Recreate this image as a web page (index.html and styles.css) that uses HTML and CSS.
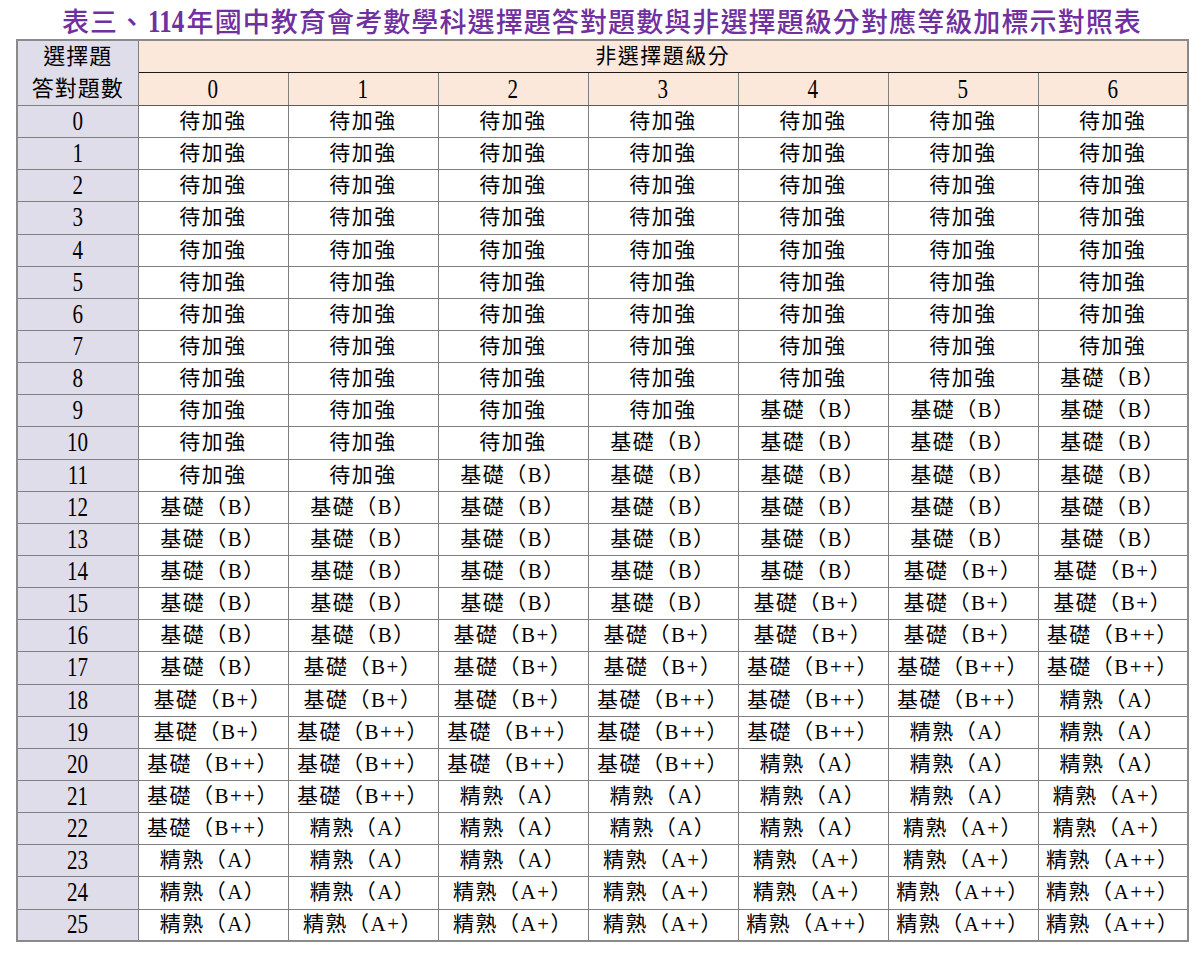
FILE: index.html
```html
<!DOCTYPE html>
<html lang="zh-Hant">
<head>
<meta charset="utf-8">
<title>表三、114年國中教育會考數學科選擇題答對題數與非選擇題級分對應等級加標示對照表</title>
<link rel="stylesheet" href="styles.css">
</head>
<body>
<h1 class="title">表三、<span class="tnum">114</span>年國中教育會考數學科選擇題答對題數與非選擇題級分對應等級加標示對照表</h1>
<table class="grid">
<colgroup>
<col class="c-first"><col class="c-data"><col class="c-data"><col class="c-data"><col class="c-data"><col class="c-data"><col class="c-data"><col class="c-data">
</colgroup>
<thead>
<tr class="h1row"><th class="corner" rowspan="2">選擇題<br>答對題數</th><th class="span" colspan="7">非選擇題級分</th></tr>
<tr class="h2row"><th><span class="n">0</span></th><th><span class="n">1</span></th><th><span class="n">2</span></th><th><span class="n">3</span></th><th><span class="n">4</span></th><th><span class="n">5</span></th><th><span class="n">6</span></th></tr>
</thead>
<tbody>
<tr><th><span class="n">0</span></th><td>待加強</td><td>待加強</td><td>待加強</td><td>待加強</td><td>待加強</td><td>待加強</td><td>待加強</td></tr>
<tr><th><span class="n">1</span></th><td>待加強</td><td>待加強</td><td>待加強</td><td>待加強</td><td>待加強</td><td>待加強</td><td>待加強</td></tr>
<tr><th><span class="n">2</span></th><td>待加強</td><td>待加強</td><td>待加強</td><td>待加強</td><td>待加強</td><td>待加強</td><td>待加強</td></tr>
<tr><th><span class="n">3</span></th><td>待加強</td><td>待加強</td><td>待加強</td><td>待加強</td><td>待加強</td><td>待加強</td><td>待加強</td></tr>
<tr><th><span class="n">4</span></th><td>待加強</td><td>待加強</td><td>待加強</td><td>待加強</td><td>待加強</td><td>待加強</td><td>待加強</td></tr>
<tr><th><span class="n">5</span></th><td>待加強</td><td>待加強</td><td>待加強</td><td>待加強</td><td>待加強</td><td>待加強</td><td>待加強</td></tr>
<tr><th><span class="n">6</span></th><td>待加強</td><td>待加強</td><td>待加強</td><td>待加強</td><td>待加強</td><td>待加強</td><td>待加強</td></tr>
<tr><th><span class="n">7</span></th><td>待加強</td><td>待加強</td><td>待加強</td><td>待加強</td><td>待加強</td><td>待加強</td><td>待加強</td></tr>
<tr><th><span class="n">8</span></th><td>待加強</td><td>待加強</td><td>待加強</td><td>待加強</td><td>待加強</td><td>待加強</td><td>基礎（B）</td></tr>
<tr><th><span class="n">9</span></th><td>待加強</td><td>待加強</td><td>待加強</td><td>待加強</td><td>基礎（B）</td><td>基礎（B）</td><td>基礎（B）</td></tr>
<tr><th><span class="n">10</span></th><td>待加強</td><td>待加強</td><td>待加強</td><td>基礎（B）</td><td>基礎（B）</td><td>基礎（B）</td><td>基礎（B）</td></tr>
<tr><th><span class="n">11</span></th><td>待加強</td><td>待加強</td><td>基礎（B）</td><td>基礎（B）</td><td>基礎（B）</td><td>基礎（B）</td><td>基礎（B）</td></tr>
<tr><th><span class="n">12</span></th><td>基礎（B）</td><td>基礎（B）</td><td>基礎（B）</td><td>基礎（B）</td><td>基礎（B）</td><td>基礎（B）</td><td>基礎（B）</td></tr>
<tr><th><span class="n">13</span></th><td>基礎（B）</td><td>基礎（B）</td><td>基礎（B）</td><td>基礎（B）</td><td>基礎（B）</td><td>基礎（B）</td><td>基礎（B）</td></tr>
<tr><th><span class="n">14</span></th><td>基礎（B）</td><td>基礎（B）</td><td>基礎（B）</td><td>基礎（B）</td><td>基礎（B）</td><td>基礎（B+）</td><td>基礎（B+）</td></tr>
<tr><th><span class="n">15</span></th><td>基礎（B）</td><td>基礎（B）</td><td>基礎（B）</td><td>基礎（B）</td><td>基礎（B+）</td><td>基礎（B+）</td><td>基礎（B+）</td></tr>
<tr><th><span class="n">16</span></th><td>基礎（B）</td><td>基礎（B）</td><td>基礎（B+）</td><td>基礎（B+）</td><td>基礎（B+）</td><td>基礎（B+）</td><td>基礎（B++）</td></tr>
<tr><th><span class="n">17</span></th><td>基礎（B）</td><td>基礎（B+）</td><td>基礎（B+）</td><td>基礎（B+）</td><td>基礎（B++）</td><td>基礎（B++）</td><td>基礎（B++）</td></tr>
<tr><th><span class="n">18</span></th><td>基礎（B+）</td><td>基礎（B+）</td><td>基礎（B+）</td><td>基礎（B++）</td><td>基礎（B++）</td><td>基礎（B++）</td><td>精熟（A）</td></tr>
<tr><th><span class="n">19</span></th><td>基礎（B+）</td><td>基礎（B++）</td><td>基礎（B++）</td><td>基礎（B++）</td><td>基礎（B++）</td><td>精熟（A）</td><td>精熟（A）</td></tr>
<tr><th><span class="n">20</span></th><td>基礎（B++）</td><td>基礎（B++）</td><td>基礎（B++）</td><td>基礎（B++）</td><td>精熟（A）</td><td>精熟（A）</td><td>精熟（A）</td></tr>
<tr><th><span class="n">21</span></th><td>基礎（B++）</td><td>基礎（B++）</td><td>精熟（A）</td><td>精熟（A）</td><td>精熟（A）</td><td>精熟（A）</td><td>精熟（A+）</td></tr>
<tr><th><span class="n">22</span></th><td>基礎（B++）</td><td>精熟（A）</td><td>精熟（A）</td><td>精熟（A）</td><td>精熟（A）</td><td>精熟（A+）</td><td>精熟（A+）</td></tr>
<tr><th><span class="n">23</span></th><td>精熟（A）</td><td>精熟（A）</td><td>精熟（A）</td><td>精熟（A+）</td><td>精熟（A+）</td><td>精熟（A+）</td><td>精熟（A++）</td></tr>
<tr><th><span class="n">24</span></th><td>精熟（A）</td><td>精熟（A）</td><td>精熟（A+）</td><td>精熟（A+）</td><td>精熟（A+）</td><td>精熟（A++）</td><td>精熟（A++）</td></tr>
<tr><th><span class="n">25</span></th><td>精熟（A）</td><td>精熟（A+）</td><td>精熟（A+）</td><td>精熟（A+）</td><td>精熟（A++）</td><td>精熟（A++）</td><td>精熟（A++）</td></tr>
</tbody>
</table>
</body>
</html>
```

FILE: styles.css
```css
html, body {
  margin: 0;
  padding: 0;
  background: #ffffff;
}

body {
  font-family: "Liberation Serif", "Noto Sans CJK TC", serif;
  color: #000000;
}

.title {
  margin: 0;
  height: 39px;
  line-height: 42px;
  text-align: center;
  font-family: "Liberation Serif", "Noto Sans CJK TC", serif;
  font-size: 27px;
  font-weight: 500;
  letter-spacing: 1.1px;
  color: #7030a0;
  white-space: nowrap;
}

.title .tnum {
  display: inline-block;
  font-size: 32px;
  font-weight: 700;
  transform: scaleX(0.78);
  margin: 0 -3px;
  letter-spacing: 0;
}

.grid {
  margin-left: 16px;
  border-collapse: collapse;
  table-layout: fixed;
  width: 1172px;
  border: 2px solid #8a8a8a;
}

.c-first { width: 121px; }
.c-data { width: 150px; }

.grid th,
.grid td {
  padding: 0;
  text-align: center;
  vertical-align: middle;
  font-weight: 400;
  font-size: 21px;
  line-height: 1;
  letter-spacing: 1.5px;
  border: 1px solid #7f7f7f;
  white-space: nowrap;
}

.grid thead tr { height: 32px; }
.grid tbody tr { height: 32.15px; }

.grid thead th {
  background: #fbe8da;
}

.grid .corner {
  background: #e0ddeb;
  line-height: 32px;
  font-size: 22px;
  letter-spacing: 1px;
  border-bottom-color: #7f7f7f;
}

.grid .h1row .span {
  border-bottom: 1px solid #1a1a1a;
  letter-spacing: 1.5px;
}

.grid .h2row th {
  border-top: 1px solid #1a1a1a;
  border-bottom: 1px solid #5a5a5a;
}

.grid tbody th {
  background: #e0ddeb;
}

.n {
  display: inline-block;
  font-size: 27px;
  transform: scaleX(0.78);
  letter-spacing: 0;
}
```
